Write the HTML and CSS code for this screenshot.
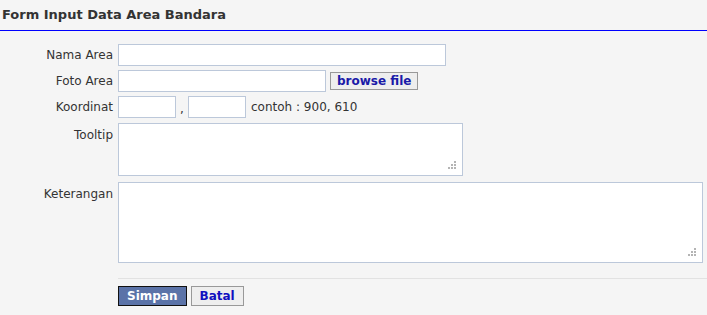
FILE: index.html
```html
<!DOCTYPE html>
<html lang="en">
<head>
    <meta charset="UTF-8" />
    <title>Form Input Data Area Bandara</title>
    <link rel="stylesheet" href="styles.css">
</head>
<body>
    <h2 class="form-title">Form Input Data Area Bandara</h2>

    <form class="area-form">
        <div class="form-row">
            <label for="namaArea">Nama Area</label>
            <div class="field"><input type="text" id="namaArea" class="input-long" /></div>
        </div>
        <div class="form-row">
            <label for="fotoArea">Foto Area</label>
            <div class="field">
                <input type="text" id="fotoArea" class="input-file" />
                <button type="button" class="btn-browse">browse file</button>
            </div>
        </div>
        <div class="form-row">
            <label for="koordX">Koordinat</label>
            <div class="field">
                <input type="text" id="koordX" class="input-short" />
                <span class="comma">,</span>
                <input type="text" id="koordY" class="input-short" />
                <span class="hint">contoh : 900, 610</span>
            </div>
        </div>
        <div class="form-row row-top">
            <label for="tooltip">Tooltip</label>
            <div class="field"><textarea id="tooltip" class="area-tooltip"></textarea></div>
        </div>
        <div class="form-row row-top">
            <label for="keterangan">Keterangan</label>
            <div class="field"><textarea id="keterangan" class="area-ket"></textarea></div>
        </div>
        <div class="form-actions">
            <button type="submit" class="btn-save">Simpan</button>
            <button type="button" class="btn-cancel">Batal</button>
        </div>
    </form>
</body>
</html>
```

FILE: styles.css
```css
* {
    margin: 0; padding: 0; box-sizing: border-box;
    font-family: 'DejaVu Sans', Verdana, sans-serif;
}
body {
    background: #f5f5f5;
    color: #333;
    font-size: 12px;
}
.form-title {
    font-size: 13px;
    font-weight: bold;
    color: #333;
    padding: 7px 2px 0;
    height: 31px;
    border-bottom: 1px solid #0000ff;
}
.area-form {
    padding-top: 13px;
}
.form-row {
    display: flex;
    align-items: center;
    margin-bottom: 4px;
}
.form-row.row-top {
    align-items: flex-start;
    margin-top: 5px;
    margin-bottom: 6px;
}
.form-row label {
    width: 113px;
    text-align: right;
    color: #333;
}
.row-top label {
    padding-top: 5px;
}
.field {
    margin-left: 5px;
    display: flex;
    align-items: center;
}
input[type="text"], textarea {
    background: #fff;
    border: 1px solid #bcc8da;
    height: 22px;
    font-size: 12px;
}
.input-long { width: 328px; }
.input-file { width: 208px; }
.input-short { width: 58px; }
.comma {
    width: 12px;
    text-align: center;
    padding-top: 4px;
}
.hint {
    margin-left: 5px;
}
.btn-browse {
    margin-left: 4px;
    height: 18px;
    padding: 0 6px;
    background: #eee;
    border: 1px solid #999;
    color: #1a1aa8;
    font-weight: bold;
    font-size: 12px;
}
/* grip drawn as dots, like the old browser resizer */
textarea {
    display: block;
    resize: none;
    background: #fff url("data:image/svg+xml,%3Csvg xmlns='http://www.w3.org/2000/svg' width='8' height='8'%3E%3Cg fill='%23b4b4b4'%3E%3Crect x='6' y='0' width='2' height='2'/%3E%3Crect x='3' y='3' width='2' height='2'/%3E%3Crect x='6' y='3' width='2' height='2'/%3E%3Crect x='0' y='6' width='2' height='2'/%3E%3Crect x='3' y='6' width='2' height='2'/%3E%3Crect x='6' y='6' width='2' height='2'/%3E%3C/g%3E%3C/svg%3E") no-repeat right 6px bottom 6px;
}
.area-tooltip {
    width: 345px;
    height: 53px;
}
.area-ket {
    width: 585px;
    height: 81px;
}
.form-actions {
    margin: 15px 0 0 118px;
    padding-top: 7px;
    border-top: 1px solid #e2e2e2;
    display: flex;
    gap: 4px;
}
.form-actions button {
    height: 20px;
    font-size: 12px;
    font-weight: bold;
    padding: 0 8px;
}
.btn-save {
    background: #5b73a8;
    color: #fff;
    border: 1px solid #111;
}
.btn-cancel {
    background: #eee;
    color: #1010c0;
    border: 1px solid #999;
}
```
